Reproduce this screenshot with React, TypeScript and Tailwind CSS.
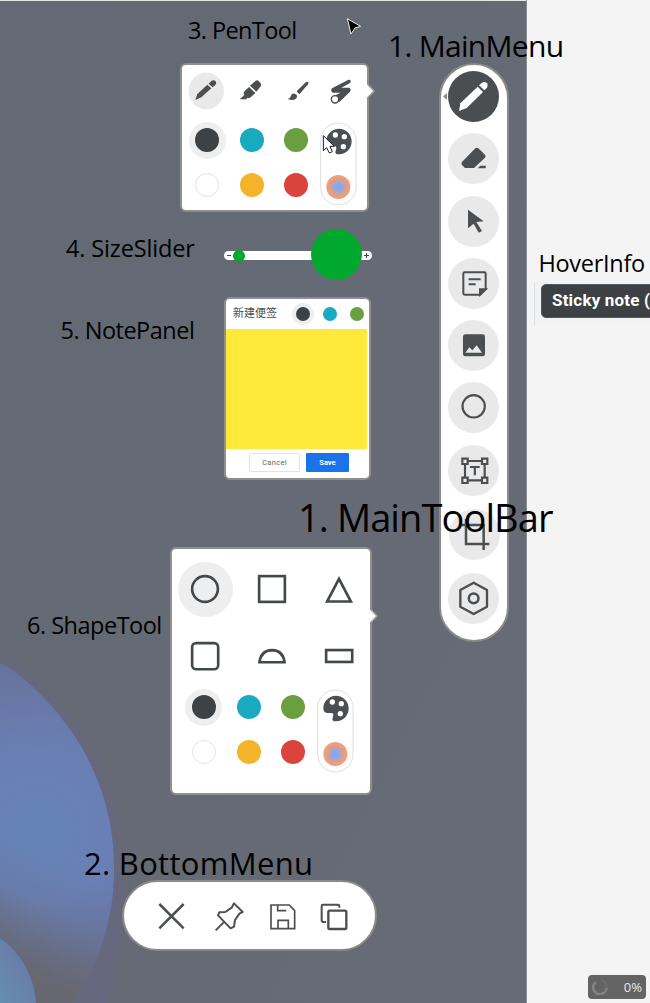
import type { ReactNode } from "react";

const INK = "#4b4f52";

function Label({ className, children }: { className: string; children: ReactNode }) {
  return (
    <span
      className={`absolute z-20 whitespace-nowrap leading-none text-black font-['Open_Sans','Noto_Sans',sans-serif] ${className}`}
    >
      {children}
    </span>
  );
}

function Wallpaper() {
  return (
    <svg className="absolute inset-0" width="526" height="1003" viewBox="0 0 526 1003">
      <defs>
        <linearGradient id="base" x1="0" y1="0" x2="1" y2="1">
          <stop offset="0" stopColor="#636a75" />
          <stop offset="0.5" stopColor="#656a74" />
          <stop offset="1" stopColor="#666b76" />
        </linearGradient>
        <radialGradient id="petal" gradientUnits="userSpaceOnUse" cx="38" cy="830" r="170">
          <stop offset="0" stopColor="#6484b7" />
          <stop offset="0.45" stopColor="#6a7fb6" />
          <stop offset="1" stopColor="#67729a" />
        </radialGradient>
        <linearGradient id="shade" gradientUnits="userSpaceOnUse" x1="62" y1="865" x2="15" y2="965">
          <stop offset="0" stopColor="#66676f" stopOpacity="0" />
          <stop offset="0.4" stopColor="#66676f" stopOpacity="0.2" />
          <stop offset="1" stopColor="#66676f" stopOpacity="0.95" />
        </linearGradient>
        <linearGradient id="low" x1="0" y1="1" x2="1" y2="0">
          <stop offset="0" stopColor="#668eb0" />
          <stop offset="1" stopColor="#6a73a6" />
        </linearGradient>
        <filter id="soft" x="-20%" y="-20%" width="140%" height="140%">
          <feGaussianBlur stdDeviation="3" />
        </filter>
      </defs>
      <rect width="526" height="1003" fill="url(#base)" />
      <path
        d="M-10 653C40 670 85 728 108 790C128 850 126 935 104 1015H-10Z"
        fill="#666780"
        filter="url(#soft)"
      />
      <path d="M0 663C33 680 72 725 90 763C108 802 114 833 114 870C114 920 98 965 73 1003H0Z" fill="url(#petal)" />
      <path d="M0 663C33 680 72 725 90 763C108 802 114 833 114 870C114 920 98 965 73 1003H0Z" fill="url(#shade)" />
      <path d="M0 938C20 952 34 975 36 1003H0Z" fill="url(#low)" />
    </svg>
  );
}

/* Main menu glyphs share a 153 x 153 box. */
const MAIN_ICONS: ReactNode[] = [
  <g fill="#fff">
    <path d="M33 120L37 97L89 47L105 63L56 111Z" />
    <path d="M93 43L101 36Q110 29 117 37Q122 44 117 50L109 58Z" />
  </g>,
  <g fill={INK}>
    <path d="M82 46Q87 42 91 46L111 65Q115 69 111 74L78 105H51L42 96Q38 92 42 87Z" />
    <path d="M97 98H113V106H89Z" />
  </g>,
  <path fill={INK} d="M60 41L107 76L85 78L102 105L92 110L77 83L60 97Z" />,
  <g stroke={INK} strokeWidth="6" fill="none">
    <path d="M50 43H109Q113 43 113 47V94L96 110H50Q46 110 46 106V47Q46 43 50 43Z" />
    <path d="M96 110V94H113Z" fill={INK} />
    <path d="M62 64H98M62 79H83" />
  </g>,
  <g>
    <rect x="45" y="43" width="66" height="66" rx="7" fill={INK} />
    <path d="M52 98L64 82L73 91L86 76L102 98Z" fill="#e9e9e9" />
  </g>,
  <circle cx="77" cy="73" r="33.500" fill="none" stroke={INK} strokeWidth="6.500" />,
  <g stroke={INK} strokeWidth="6.500" fill="none">
    <path d="M60 48H101M60 106H101M51 58V97M110 58V97" />
    <path d="M43 41H59V57H43ZM102 41H118V57H102ZM43 98H59V114H43ZM102 98H118V114H102Z" />
    <path d="M66 66H95M80.500 66V91" />
  </g>,
  <path d="M51 30V105H121M38 48H104V123" stroke={INK} strokeWidth="7.500" fill="none" />,
  <g stroke={INK} strokeWidth="7" fill="none" strokeLinejoin="round">
    <path d="M77 29L117 51V101L77 123L37 101V51Z" />
    <circle cx="77" cy="76" r="14.500" strokeWidth="7.500" />
  </g>,
];

const MAIN_GAPS = [
  "",
  "mt-[11.200px]",
  "mt-[11.200px]",
  "mt-[11.200px]",
  "mt-[11.200px]",
  "mt-[11.200px]",
  "mt-[12px]",
  "mt-[12.500px] ml-[2px]",
  "mt-[13.200px]",
];

function MainMenu() {
  return (
    <nav className="absolute left-[438.500px] top-[63px] flex h-[579px] w-[70px] flex-col items-center rounded-[35px] border-2 border-[#8a8a88] bg-white pt-[6.300px]">
      {MAIN_ICONS.map((icon, i) => (
        <button
          key={i}
          className={`size-[51px] shrink-0 rounded-full ${i === 0 ? "bg-[#4a4e51]" : "bg-[#e9e9e9]"} ${MAIN_GAPS[i]}`}
        >
          <svg width="51" height="51" viewBox="0 0 153 153">
            {icon}
          </svg>
        </button>
      ))}
      <svg className="absolute left-[2px] top-[28px]" width="4" height="7" viewBox="0 0 4 7">
        <path d="M0 3.500L4 0V7Z" fill="#8a8a88" />
      </svg>
    </nav>
  );
}

function Notch({ className }: { className: string }) {
  return (
    <svg className={`absolute ${className}`} width="9" height="16" viewBox="0 0 9 16">
      <path d="M0 1.500L6.500 8L0 14.500Z" fill="#fff" />
      <path d="M1.500 2L7.200 8L1.500 14" fill="none" stroke="#9b9b99" strokeWidth="1.500" />
    </svg>
  );
}

function ColorGrid({ id }: { id: string }) {
  return (
    <div className="flex h-[90px]">
      <div className="grid shrink-0 grid-cols-[repeat(3,44.600px)] grid-rows-2 place-items-center">
        <span className="flex size-[37px] items-center justify-center rounded-full bg-[#eeeeee]">
          <span className="size-6 rounded-full bg-[#3e4245]" />
        </span>
        <span className="size-6 rounded-full bg-[#1aaac0]" />
        <span className="size-6 rounded-full bg-[#699f3f]" />
        <span className="size-6 rounded-full border border-[#e3e3e3] bg-white" />
        <span className="size-6 rounded-full bg-[#f3b32b]" />
        <span className="size-6 rounded-full bg-[#d9453d]" />
      </div>
      <svg className="ml-[1.500px] mt-[4px] shrink-0" width="37" height="84" viewBox="0 0 111 252">
        <defs>
          <radialGradient id={id}>
            <stop offset="0" stopColor="#7ba7f5" />
            <stop offset="0.250" stopColor="#8aa8ea" />
            <stop offset="0.780" stopColor="#ee9c79" />
            <stop offset="1" stopColor="#f3a078" />
          </radialGradient>
        </defs>
        <rect x="2" y="3" width="106" height="246" rx="53" fill="#fff" stroke="#dedede" strokeWidth="3" />
        <path
          fill={INK}
          d="M57 20C36 20 19 37 19 57C19 68 25 72 34 72H43C49 72 51 77 47 86C44 94 49 97 57 97C79 97 95 80 95 58C95 37 78 20 57 20Z"
        />
        <g fill="#fff">
          <circle cx="46" cy="39" r="8" />
          <circle cx="73" cy="44" r="8" />
          <circle cx="70" cy="74" r="8" />
        </g>
        <circle cx="55" cy="195" r="36" fill={`url(#${id})`} />
      </svg>
    </div>
  );
}

function PenTool() {
  return (
    <section className="absolute left-[180px] top-[63px] h-[149px] w-[189px] rounded-[6px] border-2 border-[#8f8f8d] bg-white pl-[3px]">
      <div className="flex h-[52.500px] pt-[7px]">
        <svg width="178" height="38" viewBox="0 0 534 114" fill={INK}>
          <g transform="translate(-45 -215)">
            <ellipse cx="109" cy="272" rx="53" ry="55" fill="#e9e9e9" />
            <path d="M76 299L82 281L112 253L124 264L94 291Z" />
            <path d="M116 250L124 242Q131 237 137 243Q141 249 136 254L128 261Z" />
            <path d="M209 297L223 284Q218 278 224 272L237 260L256 278L243 290Q238 295 232 292L229 297Z" />
            <path d="M240 256L257 241Q262 238 266 242L272 249Q275 254 271 259L259 274Z" />
            <path d="M380 273L407 246Q412 242 415 246Q417 249 413 253L388 282Z" />
            <path d="M353 296Q361 295 363 286Q366 278 374 280Q384 283 380 292Q373 304 353 296Z" />
            <path d="M486 264L534 239Q540 236 542 241Q543 246 539 249L514 262H538Q545 266 540 274L509 304H485L483 291L512 277H488Q480 271 486 264Z" />
            <circle cx="495" cy="297" r="11" fill="#fff" stroke={INK} strokeWidth="4" />
          </g>
        </svg>
      </div>
      <ColorGrid id="pen-mix" />
      <Notch className="left-[184.500px] top-[17.500px]" />
      <Pointer />
    </section>
  );
}

function Pointer() {
  return (
    <svg className="absolute left-[140px] top-[69px]" width="15" height="21" viewBox="0 0 45 63">
      <path
        d="M4 5V50L14 41L22 57L31 53L24 37H37Z"
        fill="#fff"
        stroke="#1c1c2c"
        strokeWidth="3"
      />
    </svg>
  );
}

function SizeSlider() {
  return (
    <div className="absolute left-[224px] top-[228px] flex h-[53px] w-[148px] items-center">
      <div className="flex h-[9px] w-full items-center rounded-full bg-white pl-[3px] pr-[3px] mt-[2px]">
        <span className="h-px w-[4px] bg-[#444]" />
        <span className="ml-[2px] size-3 shrink-0 rounded-full bg-[#00a82d]" />
        <span className="ml-[65.500px] -mt-[2px] size-[51px] shrink-0 rounded-full bg-[#00a82d]" />
        <svg className="ml-auto shrink-0" width="5" height="5" viewBox="0 0 5 5">
          <path d="M0 2.500H5M2.500 0V5" stroke="#444" />
        </svg>
      </div>
    </div>
  );
}

function NotePanel() {
  return (
    <section className="absolute left-[224px] top-[297px] flex h-[183px] w-[147px] flex-col rounded-[6px] border-2 border-[#8f8f8d] bg-white font-[Roboto,'Noto_Sans_CJK_SC',sans-serif]">
      <header className="flex h-[30px] shrink-0 items-center pl-[7px]">
        <h2 className="-mt-[3px] w-[59px] whitespace-nowrap text-[11px] leading-none text-[#4c4f55] font-['Noto_Sans_CJK_SC',sans-serif]">
          新建便签
        </h2>
        <span className="flex size-[22px] shrink-0 items-center justify-center rounded-full bg-[#eeeeee]">
          <span className="size-[14px] rounded-full bg-[#3e4245]" />
        </span>
        <span className="ml-[9px] size-[14px] shrink-0 rounded-full bg-[#1aaac0]" />
        <span className="ml-[12.500px] size-[14px] shrink-0 rounded-full bg-[#699f3f]" />
      </header>
      <div className="h-[119.500px] w-[141px] shrink-0 bg-[#ffe93b]" />
      <footer className="flex gap-[6px] pl-[23px] pt-[4.500px] text-[7.500px] leading-none">
        <button className="h-[19px] w-[51px] rounded-[1px] border border-[#e3e3e3] pt-px text-[#5f6368] tracking-[0.300px]">
          Cancel
        </button>
        <button className="h-[19px] w-[43px] rounded-[1px] bg-[#1a73e8] pt-px font-bold text-white">Save</button>
      </footer>
    </section>
  );
}

const SHAPES: ReactNode[] = [
  <circle cx="100" cy="100" r="39" />,
  <rect x="61" y="61" width="78" height="78" />,
  <path d="M100 69L136 138H64Z" />,
  <rect x="61" y="61" width="79" height="79" rx="12" />,
  <path d="M62 119Q66 83 100 82Q134 83 138 119Z" />,
  <rect x="61" y="82" width="79" height="36" />,
];

function ShapeTool() {
  return (
    <section className="absolute left-[170px] top-[547px] h-[248px] w-[202px] rounded-[6px] border-2 border-[#8f8f8d] bg-white pt-[7px]">
      <div className="grid h-[128.500px] w-[200px] grid-cols-[repeat(3,66.700px)] grid-rows-[repeat(2,66.400px)]">
        {SHAPES.map((shape, i) => (
          <div key={i} className="flex items-center justify-center">
            <span
              className={`flex size-[55px] items-center justify-center rounded-full ${i === 0 ? "bg-[#eeeeee]" : ""}`}
            >
              <svg
                className="shrink-0"
                width="66"
                height="66"
                viewBox="0 0 200 200"
                fill="none"
                stroke="#43484c"
                strokeWidth="8"
              >
                {shape}
              </svg>
            </span>
          </div>
        ))}
      </div>
      <div className="pl-[9.700px]">
        <ColorGrid id="shape-mix" />
      </div>
      <Notch className="left-[197.500px] top-[58.500px]" />
    </section>
  );
}

function BottomMenu() {
  return (
    <nav className="absolute left-[122px] top-[880px] flex h-[71px] w-[255px] items-center rounded-[36px] border-2 border-[#8a8a88] bg-white pl-[32px]">
      <svg width="196" height="40" viewBox="0 0 588 120" fill="none" stroke={INK} strokeWidth="6">
        <g transform="translate(-258 -168)">
          <path d="M268 192L341 265M341 192L268 265" strokeWidth="7.500" />
          <path
            d="M492 190L518 216L509 220L495 240L492 260L482 265L444 226L448 217L466 216L485 203ZM461 247L437 271"
            strokeLinejoin="round"
          />
          <path d="M603 195H658L674 212V266H603ZM623 195V212H649M624 266V241H655V266" strokeWidth="5" />
          <path d="M768 246H760Q755 246 755 241V198Q755 194 759 194H804Q808 194 808 198V203" />
          <rect x="775" y="212" width="54" height="55" rx="4" strokeWidth="7" />
        </g>
      </svg>
    </nav>
  );
}

function HoverInfo() {
  return (
    <div className="absolute left-[534px] top-[282px] h-[43px] w-[116px] overflow-hidden border-l border-[#dcdfe3] bg-[#f1f2f4] pl-[6px] pt-[2px]">
      <div className="flex h-[34px] w-[180px] items-center whitespace-nowrap rounded-[5px] border border-[#55595c] bg-[#3d4144] pl-[10px] text-[17px] font-bold tracking-[0.200px] text-white font-[Roboto,sans-serif]">
        Sticky note (
      </div>
    </div>
  );
}

function Progress() {
  return (
    <div className="absolute left-[588px] top-[975px] flex h-[24px] w-[58px] items-center justify-between rounded-[4px] bg-[#636363] pl-[4px] pr-[4px] text-[13px] leading-none text-[#e8e8e8] font-['Open_Sans',sans-serif]">
      <svg width="16" height="16" viewBox="0 0 16 16" fill="none" strokeWidth="2.500">
        <path d="M10 1.500A6.700 6.700 0 0 1 14.500 9" stroke="#6c6c6c" />
        <path d="M14.500 9A6.700 6.700 0 1 1 4 3" stroke="#838383" />
      </svg>
      <span>0%</span>
    </div>
  );
}

export default function App() {
  return (
    <main className="relative h-[1003px] w-[650px] overflow-hidden bg-[#f4f4f4]">
      <div className="relative h-full w-[527px] border-r border-[#8b8e92]">
        <Wallpaper />
        <div className="absolute left-0 top-0 h-px w-full bg-[#e6e7e9]" />
      </div>

      <PenTool />
      <SizeSlider />
      <NotePanel />
      <ShapeTool />
      <BottomMenu />
      <MainMenu />
      <HoverInfo />
      <Progress />

      <Label className="left-[188px] top-[19px] text-[23.500px] tracking-[-0.600px]">3. PenTool</Label>
      <Label className="left-[388px] top-[31px] text-[30px] tracking-[-0.700px]">1. MainMenu</Label>
      <Label className="left-[538.500px] top-[252px] text-[23.500px] tracking-[-0.300px]">HoverInfo</Label>
      <Label className="left-[66px] top-[237px] text-[23.500px] tracking-[-0.150px]">4. SizeSlider</Label>
      <Label className="left-[60.500px] top-[319px] text-[23.500px] tracking-[-0.500px]">5. NotePanel</Label>
      <Label className="left-[27px] top-[614px] text-[23.500px] tracking-[-0.500px]">6. ShapeTool</Label>
      <Label className="left-[298px] top-[498px] text-[38px] tracking-[-0.900px]">1. MainToolBar</Label>
      <Label className="left-[84px] top-[848px] text-[31px] tracking-[0.300px]">2. BottomMenu</Label>

      <svg className="absolute left-[346px] top-[17px]" width="17" height="20" viewBox="0 0 51 60">
        <path d="M4 5L44 28L27 33L15 51Z" fill="#000" stroke="#eee" strokeWidth="3" />
      </svg>
    </main>
  );
}
